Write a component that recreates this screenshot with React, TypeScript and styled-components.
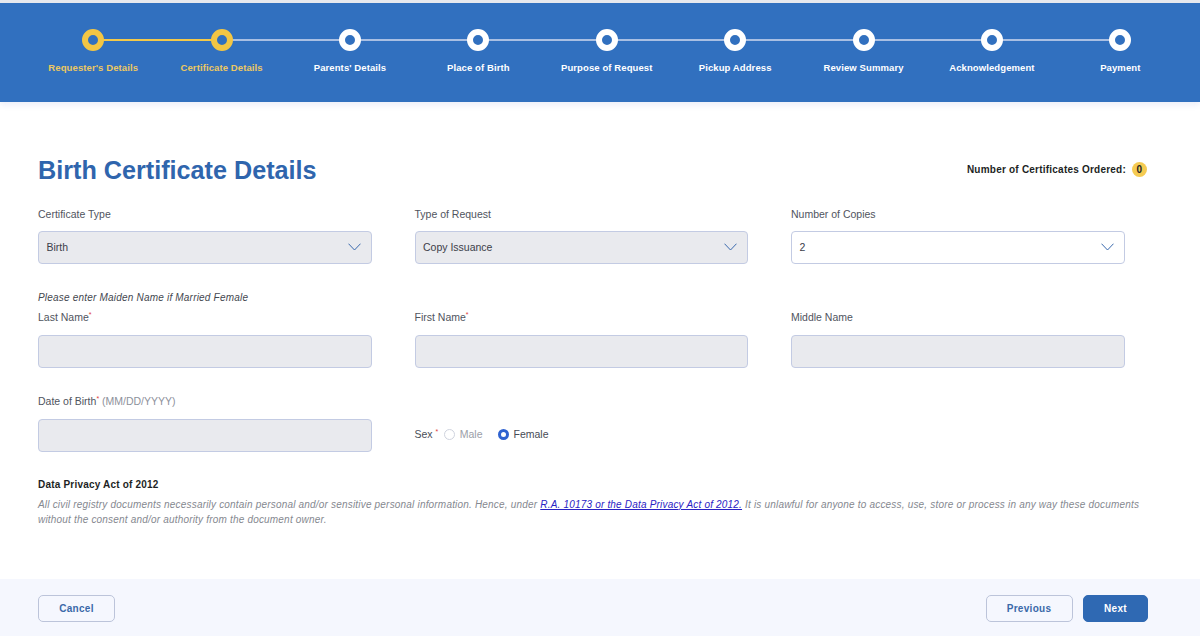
import React from "react";
import styled, { createGlobalStyle } from "styled-components";

const Global = createGlobalStyle`
  html, body { margin: 0; padding: 0; background: #fff; }
  body { font-family: "Liberation Sans", Arial, sans-serif; color: #3a3f4b; }
  * { box-sizing: border-box; }
`;
const Page = styled.div`
  width: 1200px; height: 636px; display: flex; flex-direction: column; overflow: hidden;
  border-top: 3px solid #e6e8ee;
`;
const Header = styled.header`
  height: 98.5px; flex: none; background: #3170bf; padding: 25.5px 16px 0 29px;
  box-shadow: 0 3px 6px rgba(70, 90, 200, 0.1);
  display: grid; grid-template-columns: repeat(9, 128.4px); align-content: start;
`;
const Step = styled.div<{ $done: boolean; $lineDone: boolean; $last: boolean }>`
  position: relative; display: flex; flex-direction: column; align-items: center; gap: 11.5px;
  color: ${(p) => (p.$done ? "#ecc862" : "#fff")};
  &::after {
    content: ""; display: ${(p) => (p.$last ? "none" : "block")};
    position: absolute; left: 50%; top: 10px; width: 100%; height: 2px;
    background: ${(p) => (p.$lineDone ? "#f3c94a" : "#a9bfe3")};
  }
`;
const Dot = styled.span<{ $done: boolean }>`
  position: relative; z-index: 1; width: 22px; height: 22px; border-radius: 50%;
  background: #3170bf; border: 6px solid ${(p) => (p.$done ? "#f3c644" : "#fff")};
`;
const StepLabel = styled.span`
  font-size: 9.5px; font-weight: 700; letter-spacing: 0.1px; line-height: 12px; white-space: nowrap;
`;
const Main = styled.main`
  flex: 1; padding: 53px 38px 0;
`;
const TitleRow = styled.div`
  display: flex; justify-content: space-between; align-items: center; height: 30px; padding-right: 15px;
`;
const Title = styled.h1`
  margin: 0; color: #2f65ad; font-size: 25.2px; font-weight: 700; line-height: 30px;
`;
const Counter = styled.div`
  display: flex; align-items: center; gap: 6px; font-size: 10px; font-weight: 700;
  letter-spacing: 0.22px; color: #1d1f24;
`;
const Badge = styled.span`
  width: 15px; height: 15px; border-radius: 50%; background: #f5cb52;
  display: flex; align-items: center; justify-content: center; font-size: 10px;
`;
const Grid = styled.div<{ $mt: number }>`
  display: grid; grid-template-columns: repeat(3, 333.5px); column-gap: 43px; margin-top: ${(p) => p.$mt}px;
`;
const Field = styled.div<{ $gap: number }>`
  display: flex; flex-direction: column; gap: ${(p) => p.$gap}px;
`;
const Label = styled.label`
  font-size: 10.5px; line-height: 13px; color: #50545e;
`;
const Req = styled.sup`
  color: #e03b3b; font-size: 7px; line-height: 0;
`;
const Hint = styled.span`
  color: #8d919b;
`;
const Box = styled.div<{ $disabled?: boolean }>`
  height: 33px; border-radius: 4px; border: 1px solid #c3cbe3; padding: 0 10px 0 7.5px;
  background: ${(p) => (p.$disabled ? "#e9eaee" : "#fff")};
  display: flex; align-items: center; justify-content: space-between;
  font-size: 10.5px; color: #3c404a;
`;
const Note = styled.p`
  margin: 27px 0 0; font-size: 10px; line-height: 13px; font-style: italic; color: #44474f; letter-spacing: 0.2px;
`;
const SexRow = styled.div`
  display: flex; align-items: center; height: 33px; margin-top: 23px; font-size: 10.5px; color: #4a4e58;
`;
const Sex = styled.span`
  margin-right: 5.5px;
`;
const Radio = styled.span<{ $on?: boolean }>`
  width: 11px; height: 11px; border-radius: 50%; margin-right: 5px; flex: none;
  border: ${(p) => (p.$on ? "3px solid #2f62d0" : "1px solid #cfd3de")}; background: #fff;
`;
const RadioText = styled.span<{ $muted?: boolean }>`
  margin-right: 15px; color: ${(p) => (p.$muted ? "#9b9ea8" : "#474b55")};
`;
const Privacy = styled.section`
  margin-top: 26px;
`;
const PrivacyTitle = styled.h2`
  margin: 0 0 6px; font-size: 10px; line-height: 13px; font-weight: 700; color: #1d1f24; letter-spacing: 0.2px;
`;
const PrivacyLine = styled.p`
  margin: 0; font-size: 10px; line-height: 15px; font-style: italic; color: #85888f;
  letter-spacing: 0.19px; white-space: nowrap;
`;
const Link = styled.a`
  color: #2a22c4; text-decoration: underline;
`;
const Footer = styled.footer`
  height: 57px; flex: none; background: #f5f7fe; display: flex; align-items: center;
  justify-content: space-between; padding: 2px 52px 0 38px;
`;
const Actions = styled.div`
  display: flex; gap: 10.5px;
`;
const Button = styled.button<{ $primary?: boolean; $w: number }>`
  width: ${(p) => p.$w}px; height: 26.5px; border-radius: 5px; padding: 0; font-family: inherit;
  font-size: 10px; font-weight: 700; letter-spacing: 0.3px;
  background: ${(p) => (p.$primary ? "#2f69b3" : "transparent")};
  color: ${(p) => (p.$primary ? "#fff" : "#3a69a9")};
  border: 1px solid ${(p) => (p.$primary ? "#2f69b3" : "#bcc4da")};
`;

const Chevron = () => (
  <svg width="13" height="8" viewBox="0 0 13 8" fill="none">
    <path d="M0.5 0.7 L6.5 7 L12.5 0.7" stroke="#3a69ad" strokeWidth="1" />
  </svg>
);

const steps = ["Requester's Details", "Certificate Details", "Parents' Details", "Place of Birth", "Purpose of Request", "Pickup Address", "Review Summary", "Acknowledgement", "Payment"];

export default function App() {
  return (
    <Page>
      <Global />
      <Header>
        {steps.map((s, i) => (
          <Step key={s} $done={i < 2} $lineDone={i === 0} $last={i === steps.length - 1}>
            <Dot $done={i < 2} />
            <StepLabel>{s}</StepLabel>
          </Step>
        ))}
      </Header>
      <Main>
        <TitleRow>
          <Title>Birth Certificate Details</Title>
          <Counter>Number of Certificates Ordered: <Badge>0</Badge></Counter>
        </TitleRow>
        <Grid $mt={23}>
          <Field $gap={10}><Label>Certificate Type</Label><Box $disabled>Birth<Chevron /></Box></Field>
          <Field $gap={10}><Label>Type of Request</Label><Box $disabled>Copy Issuance<Chevron /></Box></Field>
          <Field $gap={10}><Label>Number of Copies</Label><Box>2<Chevron /></Box></Field>
        </Grid>
        <Note>Please enter Maiden Name if Married Female</Note>
        <Grid $mt={7}>
          <Field $gap={11}><Label>Last Name<Req>*</Req></Label><Box $disabled /></Field>
          <Field $gap={11}><Label>First Name<Req>*</Req></Label><Box $disabled /></Field>
          <Field $gap={11}><Label>Middle Name</Label><Box $disabled /></Field>
        </Grid>
        <Grid $mt={27}>
          <Field $gap={11}><Label>Date of Birth<Req>*</Req> <Hint>(MM/DD/YYYY)</Hint></Label><Box $disabled /></Field>
          <SexRow>
            <Sex>Sex <Req>*</Req></Sex>
            <Radio /><RadioText $muted>Male</RadioText>
            <Radio $on /><RadioText>Female</RadioText>
          </SexRow>
        </Grid>
        <Privacy>
          <PrivacyTitle>Data Privacy Act of 2012</PrivacyTitle>
          <PrivacyLine>
            All civil registry documents necessarily contain personal and/or sensitive personal information. Hence, under <Link href="#">R.A. 10173 or the Data Privacy Act of 2012.</Link> It is unlawful for anyone to access, use, store or process in any way these documents
          </PrivacyLine>
          <PrivacyLine>without the consent and/or authority from the document owner.</PrivacyLine>
        </Privacy>
      </Main>
      <Footer>
        <Button $w={77}>Cancel</Button>
        <Actions>
          <Button $w={87}>Previous</Button>
          <Button $primary $w={65}>Next</Button>
        </Actions>
      </Footer>
    </Page>
  );
}
